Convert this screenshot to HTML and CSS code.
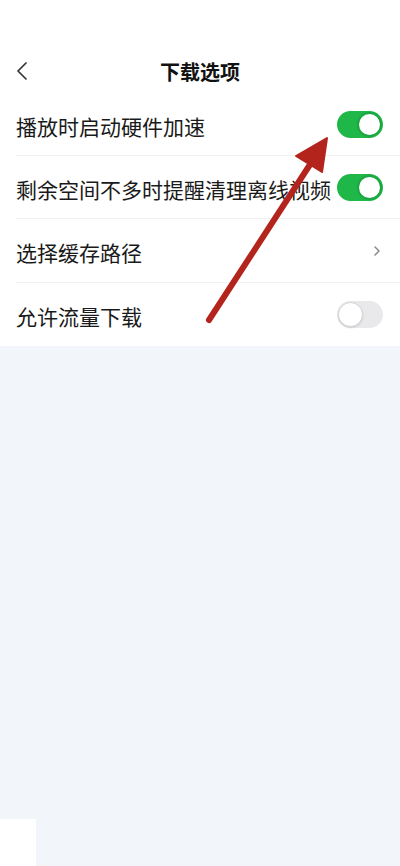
FILE: index.html
```html
<!DOCTYPE html>
<html lang="zh-CN">
<head>
<meta charset="utf-8">
<link rel="stylesheet" href="styles.css">
</head>
<body>
<div class="page">
  <div class="top">
    <header class="header">
      <svg class="back" width="12" height="18" viewBox="0 0 12 18"><path d="M10 1 L2 9 L10 17" fill="none" stroke="#333" stroke-width="1.7" stroke-linecap="round" stroke-linejoin="round"/></svg>
      <h1 class="title">下载选项</h1>
    </header>
    <div class="list">
      <div class="row">
        <span class="label">播放时启动硬件加速</span>
        <span class="switch on"><span class="knob"></span></span>
      </div>
      <div class="row">
        <span class="label">剩余空间不多时提醒清理离线视频</span>
        <span class="switch on"><span class="knob"></span></span>
      </div>
      <div class="row mid">
        <span class="label">选择缓存路径</span>
        <svg class="chev" width="8" height="12" viewBox="0 0 8 12"><path d="M2 2 L6 6 L2 10" fill="none" stroke="#888" stroke-width="1.5" stroke-linecap="round" stroke-linejoin="round"/></svg>
      </div>
      <div class="row last">
        <span class="label">允许流量下载</span>
        <span class="switch off"><span class="knob"></span></span>
      </div>
    </div>
  </div>
  <div class="rest">
    <div class="filler"></div>
    <div class="foot"><div class="patch"></div></div>
  </div>
  <svg class="arrow" width="400" height="866" viewBox="0 0 400 866">
    <line x1="209" y1="320" x2="311" y2="163" stroke="#b3241d" stroke-width="6" stroke-linecap="round"/>
    <polygon points="327,138 322,172 296,156" fill="#b3241d" stroke="#b3241d" stroke-width="2" stroke-linejoin="round"/>
  </svg>
</div>
</body>
</html>
```
FILE: styles.css
```css
html, body {
  margin: 0;
  padding: 0;
}
body {
  font-family: "Noto Sans CJK SC", "Noto Sans", sans-serif;
  color: #1a1a1a;
  background: #f2f5f9;
}
.page {
  position: relative;
  width: 400px;
  height: 866px;
  display: flex;
  flex-direction: column;
  overflow: hidden;
}
.top {
  background: #ffffff;
}
.header {
  height: 42px;
  padding-top: 51px;
  display: flex;
  align-items: center;
  justify-content: center;
  position: relative;
}
.back {
  position: absolute;
  left: 16px;
  top: 62px;
}
.title {
  margin: 0;
  font-size: 20px;
  font-weight: 700;
  line-height: 42px;
  color: #111;
}
.list {
  padding-left: 16px;
}
.row {
  height: 62px;
  display: flex;
  align-items: center;
  justify-content: space-between;
  padding-right: 17px;
  border-bottom: 1px solid #f1f1f1;
}
.row.mid {
  height: 63px;
}
.row.last {
  height: 63px;
  border-bottom: none;
}
.label {
  font-size: 21px;
  line-height: 1;
  padding-top: 4px;
  letter-spacing: 0;
  white-space: nowrap;
}
.switch {
  width: 46px;
  height: 27px;
  border-radius: 14px;
  box-sizing: border-box;
  display: flex;
  align-items: center;
  flex-shrink: 0;
}
.switch.on {
  background: #1fb748;
  justify-content: flex-end;
  padding: 0 1px;
}
.switch.off {
  background: #e9e9eb;
  justify-content: flex-start;
  padding: 0 1px;
}
.knob {
  width: 25px;
  height: 25px;
  border-radius: 50%;
  background: #fff;
  box-sizing: border-box;
}
.switch.on .knob {
  border: 2px solid #1aa640;
}
.switch.off .knob {
  border: 1.5px solid #d4d4d6;
  box-shadow: 0 1px 2px rgba(0,0,0,0.12);
}
.chev {
  margin-right: 2px;
}
.rest {
  flex: 1;
  display: flex;
  flex-direction: column;
  background: #f2f5f9;
}
.filler {
  flex: 1;
}
.foot {
  display: flex;
}
.patch {
  width: 36px;
  height: 47px;
  background: #ffffff;
}
.arrow {
  position: absolute;
  left: 0;
  top: 0;
  pointer-events: none;
}
```
